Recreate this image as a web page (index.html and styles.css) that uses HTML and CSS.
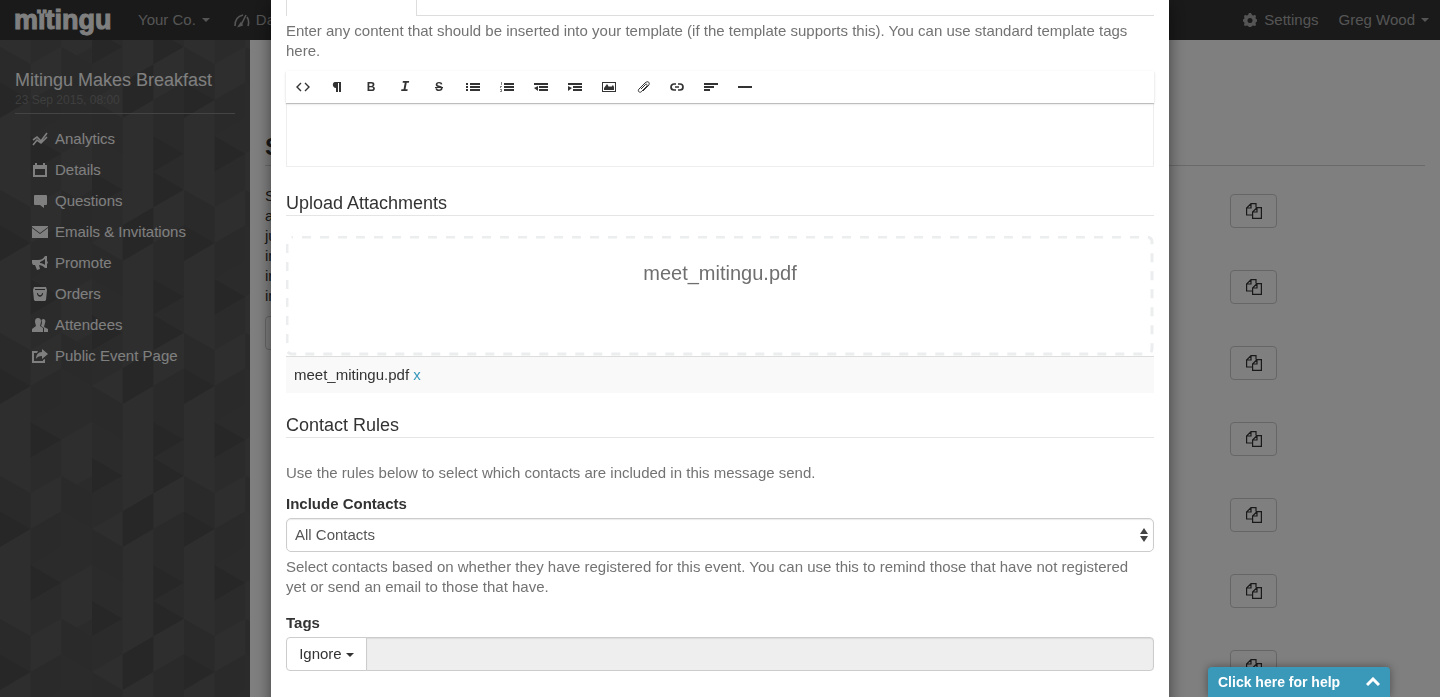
FILE: index.html
```
<!DOCTYPE html>
<html lang="en">
<head>
    <meta charset="utf-8">
    <title>Mitingu - Emails &amp; Invitations</title>
    <link rel="stylesheet" href="styles.css">
</head>
<body>
    <header class="navbar">
        <a class="brand" href="#">mïtingu</a>
        <nav class="nav-left">
            <a href="#">Your Co. <span class="caret"></span></a>
            <a href="#">
                <svg class="icon" viewBox="0 0 16 16" fill="none" stroke="currentColor" stroke-width="1.6"><path d="M1 14C1 8 4 4 9 3M13 5c2 3 2 6 1 9M7 13l5-10"/><path d="M5 14l2-3 1 2z"/></svg>
                Da
            </a>
        </nav>
        <nav class="nav-right">
            <a href="#">
                <svg class="icon" viewBox="0 0 16 16"><path fill="currentColor" fill-rule="evenodd" d="M7 1h2l1 2 1 .5L13 3l1 1-.5 2 .5 1 1 .5v2L14 10l-.5 1 .5 2-1 1-2-.5-1 .5-1 1H7l-1-1-1-.5-2 .5-1-1 .5-2L2 10l-1-.5v-2L2 7l.5-1L2 4l1-1 2 .5L6 3zM8 6a2.500 2.500 0 1 0 0 5 2.500 2.500 0 0 0 0-5z"/></svg>
                Settings
            </a>
            <a href="#">Greg Wood <span class="caret"></span></a>
        </nav>
    </header>

    <div class="page">
        <aside class="sidebar">
            <h2 class="event-name">Mitingu Makes Breakfast</h2>
            <p class="event-date">23 Sep 2015, 08:00</p>
            <ul class="side-menu">
                <li><a href="#">
                    <svg class="icon" viewBox="0 0 16 16" fill="none" stroke="currentColor" stroke-width="1.6"><path d="M1 9l4-3 4 4 6-8M1 14l4-5 4 3 6-6"/></svg>
                    Analytics</a></li>
                <li><a href="#">
                    <svg class="icon" viewBox="0 0 16 16" fill="currentColor"><path fill-rule="evenodd" d="M1 3h2V1h2v2h6V1h2v2h2v12H1zM3 7v6h10V7z"/></svg>
                    Details</a></li>
                <li><a href="#">
                    <svg class="icon" viewBox="0 0 16 16" fill="currentColor"><path d="M3 2h11a1 1 0 0 1 1 1v8a1 1 0 0 1-1 1h-2v3l-4-3H3a1 1 0 0 1-1-1V3a1 1 0 0 1 1-1z"/></svg>
                    Questions</a></li>
                <li><a href="#">
                    <svg class="icon" viewBox="0 0 16 16" fill="currentColor"><path d="M0 2h16v1L8 9 0 3zM0 4l8 6 8-6v10H0z"/></svg>
                    Emails &amp; Invitations</a></li>
                <li><a href="#">
                    <svg class="icon" viewBox="0 0 16 16" fill="currentColor"><path fill-rule="evenodd" d="M13 1h2v5a2 2 0 0 1 0 3v4h-2c-2-2-4-3-6-3l1 4-3 1-2-5H1L0 8V5h6c3 0 5-1 7-4zm0 3c-1 1-3 2-5 3v1c2 0 4 1 5 2z"/></svg>
                    Promote</a></li>
                <li><a href="#">
                    <svg class="icon" viewBox="0 0 16 16" fill="currentColor"><path fill-rule="evenodd" d="M2 1h12l1 3-1 10-1 1H3l-1-1L1 4zM3 3v1h10V3zM5 7c0 5 6 5 6 0h-1c0 3-4 3-4 0z"/></svg>
                    Orders</a></li>
                <li><a href="#">
                    <svg class="icon" viewBox="0 0 16 16" fill="currentColor"><path d="M6 1c2 0 3 1 3 4L8 9l3 2v4H0v-3l4-3-1-4c0-3 1-4 3-4z"/><path d="M11 2c2 0 3 2 2 4l-1 4 4 2v3h-4v-4l-3-2 1-3-.500-3z"/></svg>
                    Attendees</a></li>
                <li><a href="#">
                    <svg class="icon" viewBox="0 0 16 16" fill="currentColor"><path d="M10 1l6 5-6 5V8C7 8 5 9 4 11c0-4 2-7 6-7z"/><path d="M6 3H0v12h13v-4l-2 1v1H2V5h3z"/></svg>
                    Public Event Page</a></li>
            </ul>
        </aside>

        <main class="content">
            <h1 class="content-title">S</h1>
            <div class="content-row">
                <div class="intro">
                    <p>S<br>a<br>ju<br>in<br>in<br>in</p>
                    <button class="btn" type="button" aria-label="Add"></button>
                </div>
                <div class="copies">
                    <button class="btn" type="button" aria-label="Copy"><svg class="icon" viewBox="0 0 16 16"><use href="#copy"/></svg></button>
                    <button class="btn" type="button" aria-label="Copy"><svg class="icon" viewBox="0 0 16 16"><use href="#copy"/></svg></button>
                    <button class="btn" type="button" aria-label="Copy"><svg class="icon" viewBox="0 0 16 16"><use href="#copy"/></svg></button>
                    <button class="btn" type="button" aria-label="Copy"><svg class="icon" viewBox="0 0 16 16"><use href="#copy"/></svg></button>
                    <button class="btn" type="button" aria-label="Copy"><svg class="icon" viewBox="0 0 16 16"><use href="#copy"/></svg></button>
                    <button class="btn" type="button" aria-label="Copy"><svg class="icon" viewBox="0 0 16 16"><use href="#copy"/></svg></button>
                    <button class="btn" type="button" aria-label="Copy"><svg class="icon" viewBox="0 0 16 16"><use href="#copy"/></svg></button>
                </div>
            </div>
        </main>
    </div>

    <svg class="sprite">
        <symbol id="copy" viewBox="0 0 16 16">
            <path fill="none" stroke="currentColor" stroke-width="1.200" d="M6 12H.6V5L5 .6h5v4M5 .6V5H.6M6.600 9L11 4.600h4.400v10.800H6.600zM11 4.600V9H6.600"/>
        </symbol>
    </svg>

    <!-- Message modal -->
    <div class="modal-backdrop">
        <form class="modal">
            <div class="tabs">
                <button class="tab active" type="button" aria-label="Message"></button>
                <button class="tab" type="button" aria-label="Preview"></button>
            </div>
            <p class="help-text">Enter any content that should be inserted into your template (if the template supports this). You can use standard template tags here.</p>

            <div class="editor">
                <div class="toolbar">
                    <button type="button" aria-label="HTML"><svg viewBox="0 0 14 12"><path class="code" d="M5 2L1 6l4 4M9 2l4 4-4 4"/></svg></button>
                    <button type="button" aria-label="Formatting"><svg viewBox="0 0 14 12"><path d="M5 1h6v10H9V2H8v9H6V7C2 7 2 1 5 1z"/></svg></button>
                    <button type="button"><b>B</b></button>
                    <button type="button"><i>I</i></button>
                    <button type="button"><s>S</s></button>
                    <button type="button" aria-label="Bulleted list"><svg viewBox="0 0 14 12"><path d="M0 2h2v2H0zM4 2h10v2H4zM0 5h2v2H0zM4 5h10v2H4zM0 8h2v2H0zM4 8h10v2H4z"/></svg></button>
                    <button type="button" aria-label="Numbered list"><svg viewBox="0 0 14 12"><path opacity=".6" d="M1 1h1v3H1zM0 5h2v1H1v1H0zM0 8h2v3H0v-1h1V9H0z"/><path d="M4 2h10v2H4zM4 5h10v2H4zM4 8h10v2H4z"/></svg></button>
                    <button type="button" aria-label="Outdent"><svg viewBox="0 0 14 12"><path d="M0 2h14v2H0zM5 5h9v2H5zM5 8h9v2H5zM0 7l4-2v5z"/></svg></button>
                    <button type="button" aria-label="Indent"><svg viewBox="0 0 14 12"><path d="M0 2h14v2H0zM5 5h9v2H5zM5 8h9v2H5zM4 7L0 5v5z"/></svg></button>
                    <button type="button" aria-label="Insert image"><svg viewBox="0 0 14 12"><path fill-rule="evenodd" d="M0 1h14v10H0zM1 2v8h12V2z"/><path d="M2 9V7l3-4 2 3 1-1 1 1 2-2 1 2v3z"/></svg></button>
                    <button type="button" aria-label="Insert file"><svg viewBox="0 0 14 12"><path class="thin" d="M5 8l4-4c1-2 3 0 2 1l-5 5c-2 3-5 0-3-2l6-6c3-3 6 0 3 3l-5 5"/></svg></button>
                    <button type="button" aria-label="Insert link"><svg viewBox="0 0 14 12"><path class="line" d="M6 3H4a3 3 0 0 0 0 6h2M8 3h2a3 3 0 0 1 0 6H8M5 6h4"/></svg></button>
                    <button type="button" aria-label="Align"><svg viewBox="0 0 14 12"><path d="M0 2h14v2H0zM0 5h10v2H0zM0 8h6v2H0z"/></svg></button>
                    <button type="button" aria-label="Horizontal rule"><svg viewBox="0 0 14 12"><path d="M0 5h14v2H0z"/></svg></button>
                </div>
                <textarea class="editor-body" aria-label="Content"></textarea>
            </div>

            <h3 class="section-title">Upload Attachments</h3>
            <div class="dropzone">
                <svg class="dropzone-border"><rect x="1" y="1" rx="5"/></svg>
                <span>meet_mitingu.pdf</span>
            </div>
            <div class="file-row">meet_mitingu.pdf <a href="#">x</a></div>

            <h3 class="section-title">Contact Rules</h3>
            <p class="help-text rules-intro">Use the rules below to select which contacts are included in this message send.</p>

            <label class="field-label" for="include">Include Contacts</label>
            <select class="select" id="include">
                <option>All Contacts</option>
            </select>
            <p class="help-text select-help">Select contacts based on whether they have registered for this event. You can use this to remind those that have not registered yet or send an email to those that have.</p>

            <label class="field-label" for="tags">Tags</label>
            <div class="input-group">
                <button class="group-btn" type="button">Ignore <span class="caret"></span></button>
                <input class="group-input" id="tags" type="text" disabled>
            </div>
        </form>
    </div>

    <button class="help-tab" type="button">
        Click here for help
        <svg viewBox="0 0 14 10"><path d="M1 8l6-6 6 6"/></svg>
    </button>
</body>
</html>
```
FILE: styles.css
```
* {
    box-sizing: border-box;
}

body {
    margin: 0;
    height: 100vh;
    overflow: hidden;
    font-family: "Liberation Sans", Arial, sans-serif;
    font-size: 15px;
    line-height: 20px;
    color: #333;
    background: #fff;
}

h1, h2, h3, p, ul {
    margin: 0;
    padding: 0;
}

button, input, select, textarea {
    font: inherit;
    color: inherit;
}

a {
    color: #3a99bb;
    text-decoration: none;
}

.icon {
    width: 16px;
    height: 16px;
    flex: none;
}

.sprite {
    display: none;
}

.caret {
    display: inline-block;
    margin-left: 4px;
    vertical-align: middle;
    border-top: 4px solid;
    border-left: 4px solid transparent;
    border-right: 4px solid transparent;
}

/* Top bar */
.navbar {
    display: flex;
    align-items: center;
    height: 40px;
    padding: 0 11px 0 14px;
    background: #343434;
}

.navbar a {
    color: #aaa;
}

.navbar .brand {
    width: 124px;
    color: #fff;
    font-size: 27px;
    font-weight: bold;
    line-height: 36px;
    -webkit-text-stroke: 1px #fff;
}

.nav-left,
.nav-right {
    display: flex;
    gap: 20px;
}

.nav-left {
    gap: 24px;
}

.nav-right {
    margin-left: auto;
}

.navbar nav a {
    display: flex;
    align-items: center;
    gap: 6px;
    white-space: nowrap;
}

.navbar .caret {
    margin-left: 0;
}

/* Sidebar */
.page {
    display: flex;
    height: calc(100vh - 40px);
}

.sidebar {
    width: 250px;
    flex: none;
    padding: 28px 15px;
    color: #fff;
    background: #575757 0 78px url("data:image/svg+xml,%3Csvg xmlns='http://www.w3.org/2000/svg' width='184' height='143' viewBox='0 0 552 429'%3E%3Cg fill='%235c5c5c'%3E%3Cpath d='M0 0L92-54V268L0 215zM0 429L92 375V429zM92 268L184 215V322L92 375zM184 107L276 54V215L184 268zM276 375L368 322V429zM276-54L368-107V0zM368 0L460-54V268L368 322zM368 429L460 375V429zM460 268L552 215V322L460 375z'/%3E%3C/g%3E%3Cg fill='%23545454'%3E%3Cpath d='M0 215L92 268V375L0 322zM184 215L276 268V375L184 322zM276-54L368 0V107L276 54zM276 375L368 429H276zM460-54L552 0V107L460 54zM460 375L552 322V429H460zM92 375L184 322V429H92zM92-54L184-107V0L92 54z'/%3E%3C/g%3E%3Cg fill='%234e4e4e'%3E%3Cpath d='M92 54L184 107 92 161zM460 54L552 107 460 161zM276 161L368 215 276 268zM460 161L552 215 460 268zM368 322L460 268V375L368 429zM0 322L92 375 0 429z'/%3E%3C/g%3E%3C/svg%3E");
}

.event-name {
    font-size: 18px;
    font-weight: normal;
    line-height: 24px;
}

.event-date {
    padding-bottom: 4px;
    border-bottom: 1px solid #888;
    font-size: 12px;
    line-height: 17px;
    color: #7c7c7c;
}

.side-menu {
    padding: 9px 0 0 17px;
    list-style: none;
}

.side-menu a {
    display: flex;
    align-items: center;
    gap: 7px;
    height: 31px;
    color: #fff;
}

/* Page behind the modal */
.content {
    flex: 1;
    padding: 92px 15px 0;
}

.content-title {
    padding-bottom: 3px;
    border-bottom: 1px solid #d5d5d5;
    font-size: 24px;
    line-height: 30px;
}

.content-row {
    display: grid;
    grid-template-columns: 1fr 195px;
    padding-top: 20px;
}

.intro .btn {
    margin-top: 10px;
}

.copies {
    display: grid;
    gap: 42px;
    padding-top: 8px;
}

.btn {
    display: flex;
    align-items: center;
    justify-content: center;
    width: 47px;
    height: 34px;
    padding: 0;
    border: 1px solid #ccc;
    border-radius: 4px;
    background: transparent;
}

/* Modal */
.modal-backdrop {
    position: fixed;
    top: 0;
    right: 0;
    bottom: 0;
    left: 0;
    overflow: hidden;
    background: rgba(0, 0, 0, 0.5);
}

.modal {
    max-width: 898px;
    min-height: 100%;
    margin: 0 auto;
    padding: 0 15px 40px;
    background: #fff;
    box-shadow: 0 5px 15px rgba(0, 0, 0, 0.5);
}

.tabs {
    display: flex;
    height: 16px;
    border-bottom: 1px solid #ddd;
}

.tab {
    width: 130px;
    border: 0;
    background: transparent;
}

.tab.active {
    width: 131px;
    margin-bottom: -1px;
    border-left: 1px solid #ddd;
    border-right: 1px solid #ddd;
    background: #fff;
}

.help-text {
    color: #737373;
}

.tabs + .help-text {
    padding-top: 5px;
}

.editor {
    margin-top: 10px;
}

.toolbar {
    position: relative;
    display: flex;
    height: 32px;
    box-shadow: 0 1px 3px rgba(0, 0, 0, 0.1), 0 1px 1px rgba(0, 0, 0, 0.15);
}

.toolbar button {
    display: flex;
    align-items: center;
    justify-content: center;
    width: 34px;
    padding: 0;
    border: 0;
    background: transparent;
    font-size: 12px;
    font-weight: bold;
}

.toolbar i {
    font-family: "Liberation Mono", monospace;
    font-size: 14px;
}

.toolbar svg {
    width: 14px;
    height: 12px;
    fill: #333;
}

.toolbar .code,
.toolbar .line,
.toolbar .thin {
    fill: none;
    stroke: #333;
    stroke-width: 1.7;
}

.toolbar .code {
    stroke-width: 1.4;
}

.toolbar .thin {
    stroke-width: 1;
}

.editor-body {
    display: block;
    width: 100%;
    height: 64px;
    border: 1px solid #eee;
    resize: none;
}

.section-title {
    margin-top: 24px;
    border-bottom: 1px solid #e5e5e5;
    font-size: 18px;
    font-weight: normal;
    line-height: 24px;
}

.dropzone {
    position: relative;
    height: 120px;
    margin-top: 20px;
    padding-top: 25px;
    text-align: center;
    font-size: 20px;
    line-height: 24px;
    color: #6f6f6f;
}

.dropzone-border {
    position: absolute;
    top: 0;
    left: 0;
    width: 100%;
    height: 100%;
}

.dropzone-border rect {
    width: calc(100% - 3px);
    height: calc(100% - 3px);
    fill: none;
    stroke: #ebedee;
    stroke-width: 3;
    stroke-dasharray: 9 9;
    stroke-dashoffset: 8;
}

.file-row {
    margin-bottom: 20px;
    padding: 8px;
    border-top: 1px solid #ddd;
    background: #f9f9f9;
}

.file-row + .section-title {
    margin-top: 0;
}

.rules-intro {
    padding: 25px 0 11px;
}

.field-label {
    display: block;
    padding-bottom: 4px;
    font-weight: bold;
}

.select {
    display: block;
    width: 100%;
    height: 34px;
    padding: 0 8px;
    border: 1px solid #ccc;
    border-radius: 5px;
    appearance: none;
    color: #555;
    background: #fff url("data:image/svg+xml,%3Csvg xmlns='http://www.w3.org/2000/svg' width='8' height='14'%3E%3Cpath fill='%23444' d='M4 0l4 6H0zM0 8h8l-4 6z'/%3E%3C/svg%3E") no-repeat right 5px center;
    box-shadow: inset 0 1px 1px rgba(0, 0, 0, 0.08);
}

.select-help {
    padding: 5px 12px 16px 0;
}

.input-group {
    display: flex;
    height: 34px;
}

.group-btn {
    width: 81px;
    padding: 0;
    border: 1px solid #ccc;
    border-radius: 4px 0 0 4px;
    background: #fff;
}

.group-btn .caret {
    margin-left: 0;
}

.group-input {
    flex: 1;
    margin-left: -1px;
    border: 1px solid #ccc;
    border-radius: 0 4px 4px 0;
    background: #eee;
    box-shadow: inset 0 1px 1px rgba(0, 0, 0, 0.08);
}

/* Help tab */
.help-tab {
    position: fixed;
    right: 50px;
    bottom: 0;
    display: flex;
    align-items: center;
    justify-content: space-between;
    width: 182px;
    height: 30px;
    padding: 0 10px;
    border: 0;
    border-radius: 4px 4px 0 0;
    color: #fff;
    background: #3a99b9;
    box-shadow: 0 0 8px rgba(0, 0, 0, 0.4);
    font-size: 14px;
    font-weight: bold;
}

.help-tab svg {
    width: 14px;
    height: 10px;
    fill: none;
    stroke: #fff;
    stroke-width: 3;
}
```
